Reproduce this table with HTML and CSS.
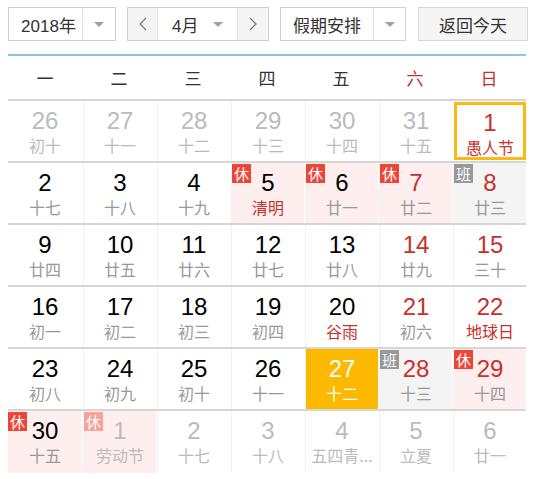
FILE: index.html
```html
<!DOCTYPE html>
<html lang="zh-CN">
<head>
  <meta charset="UTF-8">
  <title>万年历</title>
  <link rel="stylesheet" href="styles.css">
</head>
<body>
  <div class="toolbar">
    <div class="select year-select">
      <span class="select-text">2018年</span>
      <span class="select-arrow"><i class="caret"></i></span>
    </div>
    <div class="select month-select">
      <span class="month-btn">
        <svg width="8" height="14" viewBox="0 0 8 14"><polyline points="7,1 1,7 7,13" fill="none" stroke="#777" stroke-width="1.2"/></svg>
      </span>
      <span class="month-text">4月<i class="caret"></i></span>
      <span class="month-btn">
        <svg width="8" height="14" viewBox="0 0 8 14"><polyline points="1,1 7,7 1,13" fill="none" stroke="#777" stroke-width="1.2"/></svg>
      </span>
    </div>
    <div class="select holiday-select">
      <span class="select-text">假期安排</span>
      <span class="select-arrow"><i class="caret"></i></span>
    </div>
    <div class="today-btn">返回今天</div>
  </div>

  <div class="calendar">
    <div class="week-head">
      <div>一</div><div>二</div><div>三</div><div>四</div><div>五</div>
      <div class="weekend">六</div><div class="weekend">日</div>
    </div>

    <div class="week">
      <div class="day other"><span class="num">26</span><span class="lunar">初十</span></div>
      <div class="day other"><span class="num">27</span><span class="lunar">十一</span></div>
      <div class="day other"><span class="num">28</span><span class="lunar">十二</span></div>
      <div class="day other"><span class="num">29</span><span class="lunar">十三</span></div>
      <div class="day other"><span class="num">30</span><span class="lunar">十四</span></div>
      <div class="day other"><span class="num">31</span><span class="lunar">十五</span></div>
      <div class="day red fest selected"><span class="num">1</span><span class="lunar">愚人节</span></div>
    </div>

    <div class="week">
      <div class="day"><span class="num">2</span><span class="lunar">十七</span></div>
      <div class="day"><span class="num">3</span><span class="lunar">十八</span></div>
      <div class="day"><span class="num">4</span><span class="lunar">十九</span></div>
      <div class="day rest fest"><b class="badge">休</b><span class="num">5</span><span class="lunar">清明</span></div>
      <div class="day rest"><b class="badge">休</b><span class="num">6</span><span class="lunar">廿一</span></div>
      <div class="day rest red"><b class="badge">休</b><span class="num">7</span><span class="lunar">廿二</span></div>
      <div class="day work red"><b class="badge">班</b><span class="num">8</span><span class="lunar">廿三</span></div>
    </div>

    <div class="week">
      <div class="day"><span class="num">9</span><span class="lunar">廿四</span></div>
      <div class="day"><span class="num">10</span><span class="lunar">廿五</span></div>
      <div class="day"><span class="num">11</span><span class="lunar">廿六</span></div>
      <div class="day"><span class="num">12</span><span class="lunar">廿七</span></div>
      <div class="day"><span class="num">13</span><span class="lunar">廿八</span></div>
      <div class="day red"><span class="num">14</span><span class="lunar">廿九</span></div>
      <div class="day red"><span class="num">15</span><span class="lunar">三十</span></div>
    </div>

    <div class="week">
      <div class="day"><span class="num">16</span><span class="lunar">初一</span></div>
      <div class="day"><span class="num">17</span><span class="lunar">初二</span></div>
      <div class="day"><span class="num">18</span><span class="lunar">初三</span></div>
      <div class="day"><span class="num">19</span><span class="lunar">初四</span></div>
      <div class="day fest"><span class="num">20</span><span class="lunar">谷雨</span></div>
      <div class="day red"><span class="num">21</span><span class="lunar">初六</span></div>
      <div class="day red fest"><span class="num">22</span><span class="lunar">地球日</span></div>
    </div>

    <div class="week">
      <div class="day"><span class="num">23</span><span class="lunar">初八</span></div>
      <div class="day"><span class="num">24</span><span class="lunar">初九</span></div>
      <div class="day"><span class="num">25</span><span class="lunar">初十</span></div>
      <div class="day"><span class="num">26</span><span class="lunar">十一</span></div>
      <div class="day today"><span class="num">27</span><span class="lunar">十二</span></div>
      <div class="day work red"><b class="badge">班</b><span class="num">28</span><span class="lunar">十三</span></div>
      <div class="day rest red"><b class="badge">休</b><span class="num">29</span><span class="lunar">十四</span></div>
    </div>

    <div class="week">
      <div class="day rest"><b class="badge">休</b><span class="num">30</span><span class="lunar">十五</span></div>
      <div class="day rest other"><b class="badge">休</b><span class="num">1</span><span class="lunar">劳动节</span></div>
      <div class="day other"><span class="num">2</span><span class="lunar">十七</span></div>
      <div class="day other"><span class="num">3</span><span class="lunar">十八</span></div>
      <div class="day other"><span class="num">4</span><span class="lunar">五四青...</span></div>
      <div class="day other"><span class="num">5</span><span class="lunar">立夏</span></div>
      <div class="day other"><span class="num">6</span><span class="lunar">廿一</span></div>
    </div>
  </div>
</body>
</html>
```

FILE: styles.css
```css
body {
  margin: 0;
  padding: 7px 0 0 8px;
  background: #fff;
  color: #000;
  font-family: "Liberation Sans", Arial, "Noto Sans CJK SC", sans-serif;
}

/* toolbar */
.toolbar {
  display: flex;
  height: 34px;
}

.select {
  display: flex;
  box-sizing: border-box;
  height: 34px;
  border: 1px solid #d0d0d0;
  font-size: 17px;
  color: #333;
}

.select-text {
  display: flex;
  align-items: center;
  justify-content: center;
  border-right: 1px solid #e2e2e2;
}

.select-arrow {
  display: flex;
  align-items: center;
  justify-content: center;
  flex: 1;
}

.caret {
  display: inline-block;
  width: 0;
  height: 0;
  border-left: 5px solid transparent;
  border-right: 5px solid transparent;
  border-top: 5px solid #a0a0a0;
}

.year-select {
  width: 108px;
  margin-right: 11px;
}

.year-select .select-text {
  box-sizing: border-box;
  width: 74px;
  padding-left: 6px;
}

.month-select {
  width: 142px;
  margin-right: 11px;
}

.month-btn {
  display: flex;
  align-items: center;
  justify-content: center;
  width: 29px;
  background: #f5f5f5;
}

.month-text {
  display: flex;
  align-items: center;
  justify-content: space-between;
  width: 81px;
  padding: 0 14px 0 14px;
  box-sizing: border-box;
  border-left: 1px solid #e2e2e2;
  border-right: 1px solid #e2e2e2;
}

.holiday-select {
  width: 126px;
  margin-right: 12px;
}

.holiday-select .select-text {
  width: 92px;
}

.today-btn {
  display: flex;
  align-items: center;
  justify-content: center;
  box-sizing: border-box;
  width: 110px;
  height: 34px;
  border: 1px solid #d8d8d8;
  background: #f5f5f5;
  color: #333;
  font-size: 17px;
}

/* calendar */
.calendar {
  width: 518px;
  margin-top: 13px;
  border-top: 2px solid #8ac4ea;
}

.week-head {
  display: grid;
  grid-template-columns: repeat(7, 74px);
  height: 43px;
  border-bottom: 2px solid #d6d6d6;
  font-family: "Noto Sans CJK SC", sans-serif;
  font-size: 17px;
  color: #333;
}

.week-head div {
  display: flex;
  align-items: center;
  justify-content: center;
}

.week-head .weekend {
  color: #c9302c;
}

.week {
  display: grid;
  grid-template-columns: repeat(7, 74px);
  box-sizing: border-box;
  height: 62px;
  border-bottom: 2px solid #d6d6d6;
}

.week:last-child {
  border-bottom: none;
}

.day {
  position: relative;
  display: flex;
  flex-direction: column;
  align-items: center;
  box-sizing: border-box;
  padding-top: 7px;
  margin-left: 1px;
  border-left: 1px solid #f2f2f2;
}

.week .day:first-child {
  margin-left: 0;
  border-left: none;
}

.num {
  font-size: 24px;
  line-height: 26px;
  color: #000;
}

.lunar {
  text-align: center;
  font-family: "Noto Sans CJK SC", sans-serif;
  font-size: 16px;
  line-height: 22px;
  color: #999;
  white-space: nowrap;
}

.red .num {
  color: #c9302c;
}

.fest .lunar {
  color: #c9302c;
}

.other .num,
.other .lunar {
  color: #bbb;
}

.rest {
  background: #ffeeee;
}

.work {
  background: #f4f4f4;
}

.badge {
  position: absolute;
  top: 1px;
  left: 0;
  width: 19px;
  height: 19px;
  line-height: 19px;
  text-align: center;
  font-family: "Noto Sans CJK SC", sans-serif;
  font-weight: normal;
  font-size: 15px;
  color: #fff;
  background: #ee4539;
}

.work .badge {
  background: #999;
}

.other .badge {
  background: #f7a39a;
}

.selected {
  border: 3px solid #fcb913;
  margin: 1px 0 0 2px;
  height: 58px;
  padding-top: 5px;
}

.today {
  background: #fdb900;
}

.today .num,
.today .lunar {
  color: #fff;
}
```
